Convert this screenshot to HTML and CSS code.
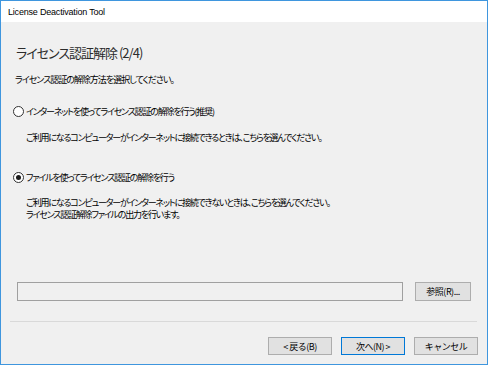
FILE: index.html
```html
<!DOCTYPE html>
<html lang="ja">
<head>
    <meta charset="UTF-8">
    <title>License Deactivation Tool</title>
    <link rel="stylesheet" href="styles.css">
</head>
<body>
    <div class="window">
        <div class="titlebar">License Deactivation Tool</div>

        <div class="content">
            <h1>ライセンス認証解除 (2/4)</h1>
            <p class="lead">ライセンス認証の解除方法を選択してください。</p>

            <div class="option first">
                <div class="radio-row">
                    <span class="radio"></span>
                    <span>インターネットを使ってライセンス認証の解除を行う(推奨)</span>
                </div>
                <p class="desc">ご利用になるコンピューターがインターネットに接続できるときは、こちらを選んでください。</p>
            </div>

            <div class="option second">
                <div class="radio-row">
                    <span class="radio checked"></span>
                    <span>ファイルを使ってライセンス認証の解除を行う</span>
                </div>
                <p class="desc two-lines">ご利用になるコンピューターがインターネットに接続できないときは、こちらを選んでください。<br>ライセンス認証解除ファイルの出力を行います。</p>
            </div>

            <div class="file-row">
                <div class="file-path"></div>
                <button class="btn browse">参照(R)...</button>
            </div>
        </div>

        <div class="footer">
            <div class="separator"></div>
            <div class="actions">
                <button class="btn">&lt; 戻る(B)</button>
                <button class="btn default">次へ(N) &gt;</button>
                <button class="btn">キャンセル</button>
            </div>
        </div>
    </div>
</body>
</html>
```

FILE: styles.css
```css
:root {
    --accent: #3f96de;
    --face: #f0f0f0;
    --text: #000000;
    --btn: #e1e1e1;
    --btn-border: #adadad;
}

* {
    box-sizing: border-box;
    margin: 0;
    padding: 0;
}

body {
    font-family: "Noto Sans CJK JP", "Noto Sans", sans-serif;
    font-feature-settings: "palt";
    color: var(--text);
    background: #ffffff;
}

.window {
    width: 488px;
    height: 365px;
    border: 1px solid var(--accent);
    background: var(--face);
    display: flex;
    flex-direction: column;
}

.titlebar {
    height: 21px;
    line-height: 22px;
    background: #ffffff;
    padding-left: 7px;
    font-family: "Liberation Sans", sans-serif;
    font-size: 9px;
    letter-spacing: -0.2px;
    color: #000;
}

.content {
    flex: 1;
    padding: 21px 15px 0 14px;
    font-size: 9px;
    letter-spacing: -1px;
}

h1 {
    font-size: 13px;
    font-weight: 400;
    line-height: 20px;
    letter-spacing: -1px;
    color: #2b2b2b;
    margin-left: 1px;
}

.lead {
    margin-top: 10px;
    line-height: 14px;
}

.option.first {
    margin-top: 17px;
}

.option.second {
    margin-top: 26px;
}

.radio-row {
    display: flex;
    align-items: center;
    gap: 2px;
    height: 14px;
    margin-left: -2px;
    letter-spacing: -1.2px;
}

.radio {
    width: 11px;
    height: 11px;
    border: 1px solid #333;
    border-radius: 50%;
    background: #fff;
    display: flex;
    align-items: center;
    justify-content: center;
}

.radio.checked::after {
    content: "";
    width: 5px;
    height: 5px;
    border-radius: 50%;
    background: #1a1a1a;
}

.desc {
    margin-top: 13px;
    margin-left: 11px;
    line-height: 13px;
    letter-spacing: -1.2px;
}

.desc.two-lines {
    line-height: 12px;
}

.file-row {
    display: flex;
    margin-top: 61px;
    margin-left: 2px;
    gap: 12px;
}

.file-path {
    width: 386px;
    height: 19px;
    border: 1px solid #a0a0a0;
    background: var(--face);
}

.btn {
    font-family: inherit;
    font-size: 9px;
    letter-spacing: -0.5px;
    color: var(--text);
    background: var(--btn);
    border: 1px solid var(--btn-border);
    height: 18px;
    width: 64px;
    cursor: pointer;
}

.btn.browse {
    width: 56px;
    height: 19px;
}

.btn.default {
    border: 1px solid #0078d7;
}

.footer {
    padding: 0 9px 9px 9px;
}

.separator {
    border-top: 1px solid #d9d9d9;
    margin-right: 1px;
}

.actions {
    display: flex;
    justify-content: flex-end;
    gap: 9px;
    margin-top: 15px;
}
```
